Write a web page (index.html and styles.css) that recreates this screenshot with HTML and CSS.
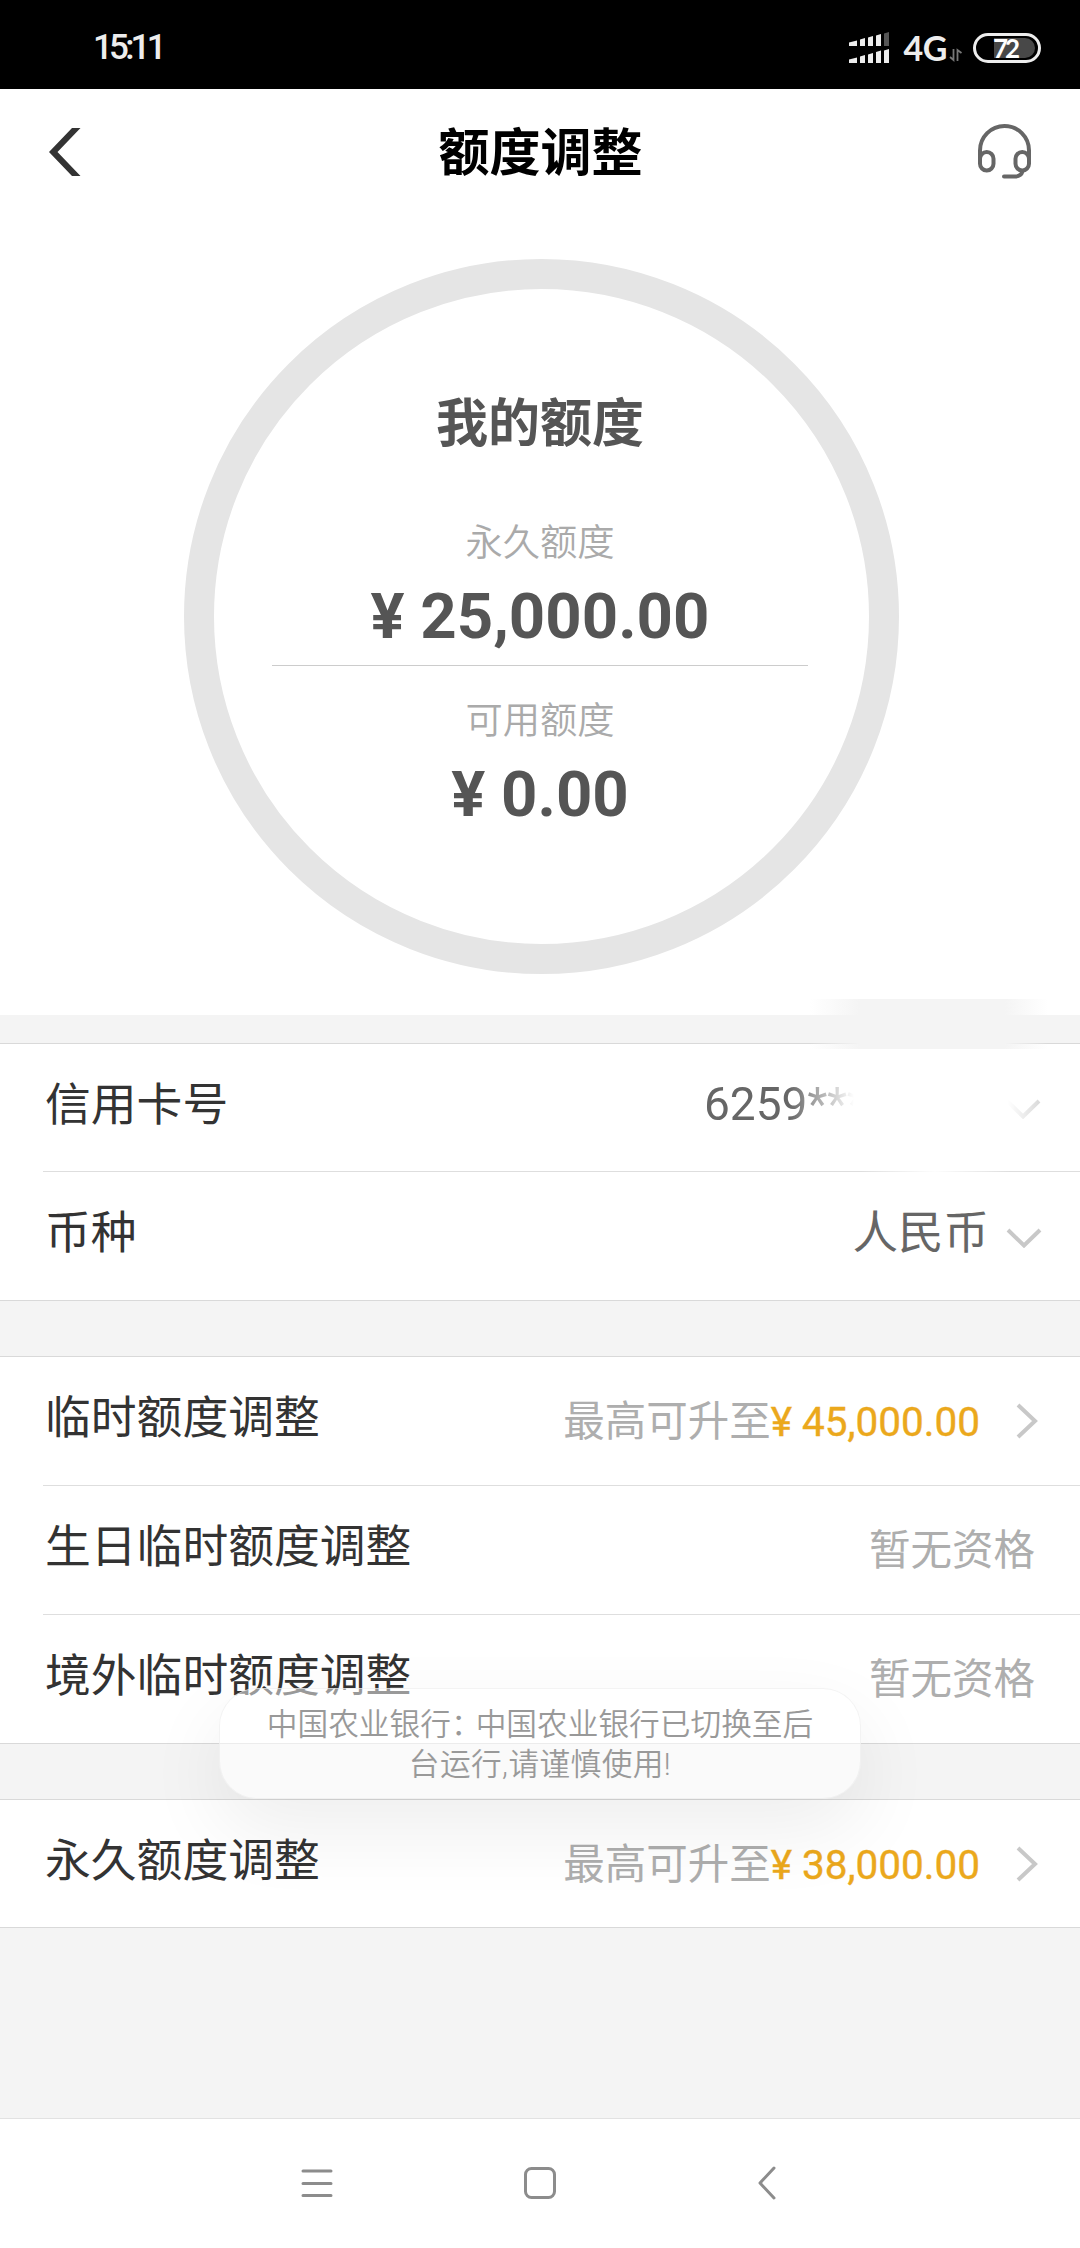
FILE: index.html
```html
<!DOCTYPE html>
<html lang="zh-CN">
<head>
<meta charset="utf-8">
<title>额度调整</title>
<link rel="stylesheet" href="styles.css">
</head>
<body>
<div class="screen">
  <div class="status">
    <div class="clock">15:11</div>
    <div class="status-icons">
      <svg class="signal" width="42" height="34" viewBox="0 0 42 34">
        <g fill="#ededed">
          <path d="M0 11.5l8-2V15H0zM11 8.5l5-1.5v8h-5zM19 6.5l5-1.5v10h-5zM27 4.500l5-1.500v12h-5z"/>
          <path d="M0 28.500l8-2V32H0zM11 25.500l5-1.500v8h-5zM19 23.500l5-1.500v10h-5zM27 21l5-1.500V32h-5zM35 19.500l5-1.500v14h-5z"/>
        </g>
        <path d="M35 2.500L40 1v14h-5z" fill="#555"/>
      </svg>
      <span class="network">4G</span>
      <svg class="traffic" width="14" height="14" viewBox="0 0 14 14"><path d="M1 9l3.500 3V1M8.500 13V2l4 3" fill="none" stroke="#777" stroke-width="1.800"/></svg>
      <div class="battery"><span>72</span></div>
    </div>
  </div>

  <header class="header">
    <svg width="32" height="48" viewBox="0 0 32 48"><path d="M23 0h8.500L8.500 24l23 24H23L0 24z" fill="#333"/></svg>
    <h1>额度调整</h1>
    <svg width="54" height="56" viewBox="0 0 54 56" fill="none" stroke="#666" stroke-width="4" stroke-linecap="round">
      <path d="M2 38V26.500a24.500 24.500 0 0 1 49 0V38"/>
      <rect x="2" y="28" width="13.500" height="18.500" rx="6.700"/>
      <rect x="37.500" y="28" width="13.500" height="18.500" rx="6.700"/>
      <path d="M44.500 47.500q-1.500 5-8 5H26"/>
    </svg>
  </header>

  <section class="summary">
    <div class="ring">
      <h2>我的额度</h2>
      <div class="caption">永久额度</div>
      <div class="amount">¥ 25,000.00</div>
      <div class="rule"></div>
      <div class="caption">可用额度</div>
      <div class="amount">¥ 0.00</div>
    </div>
  </section>

  <section class="group card-group">
    <div class="row">
      <span class="label">信用卡号</span>
      <span class="value card-number">6259***</span>
      <svg class="down masked" width="36" height="20" viewBox="0 0 36 20"><path d="M2 2l16 15.500L34 2"/></svg>
    </div>
    <div class="row">
      <span class="label">币种</span>
      <span class="value">人民币</span>
      <svg class="down" width="36" height="20" viewBox="0 0 36 20"><path d="M2 2l16 15.500L34 2"/></svg>
    </div>
    <div class="smudge"></div>
    <div class="smudge-line"></div>
  </section>

  <section class="group">
    <div class="row">
      <span class="label">临时额度调整</span>
      <span class="hint">最高可升至<b>¥ 45,000.00</b></span>
      <svg class="next" width="22" height="36" viewBox="0 0 22 36"><path d="M2 2l17 16L2 34"/></svg>
    </div>
    <div class="row">
      <span class="label">生日临时额度调整</span>
      <span class="hint none">暂无资格</span>
    </div>
    <div class="row">
      <span class="label">境外临时额度调整</span>
      <span class="hint none">暂无资格</span>
    </div>
  </section>

  <section class="group">
    <div class="row">
      <span class="label">永久额度调整</span>
      <span class="hint">最高可升至<b>¥ 38,000.00</b></span>
      <svg class="next" width="22" height="36" viewBox="0 0 22 36"><path d="M2 2l17 16L2 34"/></svg>
    </div>
  </section>

  <nav class="nav">
    <svg width="32" height="34" viewBox="0 0 32 34"><path d="M2 5h28M2 17.500h28M2 29.500h28"/></svg>
    <svg class="home" width="34" height="34" viewBox="0 0 34 34"><rect x="2.500" y="2.500" width="29" height="29" rx="6"/></svg>
    <svg class="back" width="20" height="34" viewBox="0 0 20 34"><path d="M17 2L3 17l14 15"/></svg>
  </nav>

  <div class="toast">中国农业银行<span class="colon">：</span>中国农业银行已切换至后<br><span class="tail">台运行,请谨慎使用!</span></div>
</div>
</body>
</html>
```
FILE: styles.css
```css
* { box-sizing: border-box; }
body { margin: 0; background: #f4f4f4; font-family: Roboto, "Noto Sans CJK SC", sans-serif; }
h1, h2 { margin: 0; }
svg { display: block; flex: none; }
.screen { position: relative; width: 1080px; height: 2248px; display: flex; flex-direction: column; overflow: hidden; background: #f4f4f4; }

.status { height: 89px; flex: none; background: #000; color: #ededed; display: flex; justify-content: space-between; align-items: center; padding: 6px 39px 0 93px; }
.clock { font-size: 35px; font-weight: 500; letter-spacing: -3.800px; line-height: 40px; padding-top: 1px; }
.status-icons { display: flex; align-items: center; }
.network { font: 700 34px/40px Lato, sans-serif; margin-left: 13px; letter-spacing: -.5px; }
.traffic { margin: 14px 10px 0 2px; }
.battery { width: 68px; height: 30px; border: 3px solid #ededed; border-radius: 15px; padding: 2px 3px 2px 18px; }
.battery span { display: block; height: 20px; background: #484848; border-radius: 0 10px 10px 0; font: 700 26px/20px Lato, sans-serif; letter-spacing: -3px; text-indent: -1px; color: #fff; }

.header { height: 124px; flex: none; background: #fff; display: flex; align-items: center; justify-content: space-between; padding: 1px 48px 0 49px; }
.header h1 { font-size: 51px; font-weight: 700; line-height: 60px; color: #000; margin-left: 22px; padding-top: 5px; }

.summary { height: 802px; flex: none; background: #fff; display: flex; justify-content: center; padding: 46px 0 0 3px; }
.ring { width: 715px; height: 715px; border: 30px solid #e5e5e5; border-radius: 50%; display: flex; flex-direction: column; align-items: center; padding: 106px 3px 0 0; }
.ring h2 { font-size: 52px; font-weight: 700; line-height: 60px; color: #555; }
.caption { margin-top: 63px; font-size: 37.300px; line-height: 50px; color: #aaa; font-weight: 350; }
.amount { font-size: 63.500px; line-height: 70px; font-weight: 700; color: #555; margin-top: 14px; }
.rule { width: 536px; height: 1px; background: #ccc; margin-top: 13px; flex: none; }
.rule + .caption { margin-top: 30px; }

.group { position: relative; flex: none; background: #fff; border-top: 1px solid #d9d9d9; border-bottom: 1px solid #d9d9d9; margin-top: 55px; }
.card-group { margin-top: 28px; }
.row { height: 129px; display: flex; align-items: center; margin-left: 43px; padding: 0 38px 0 2px; border-bottom: 1px solid #dedede; }
.row:last-child { border-bottom: 0; height: 128px; }
.card-group .row { height: 128px; }
.card-group .row:nth-child(2) { border-bottom: 0; }
.row:only-child { height: 127px; }
.label { flex: 1; font-size: 45.800px; line-height: 60px; color: #333; padding-bottom: 4px; }
.value { font-size: 45.500px; line-height: 60px; color: #666; padding-bottom: 4px; }
.card-number { font-size: 46px; width: 284px; margin-right: 70px; padding-bottom: 8px; -webkit-mask-image: linear-gradient(90deg, #000 85px, transparent 150px); mask-image: linear-gradient(90deg, #000 85px, transparent 150px); }
.down { margin-left: 17px; margin-top: 3px; }
.card-number + .down { margin-left: -53px; margin-right: 1px; }
.down path, .next path { fill: none; stroke: #c8c8c8; stroke-width: 4; }
.masked { -webkit-mask-image: linear-gradient(90deg, transparent 3px, #000 50px); mask-image: linear-gradient(90deg, transparent 3px, #000 50px); }
.hint { font-size: 41.500px; line-height: 60px; color: #aeaeae; white-space: nowrap; padding-top: 2px; }
.hint b { font-weight: 400; color: #eba81c; font-size: 40.500px; -webkit-text-stroke: .4px #eba81c; }
.next { margin-left: 36px; margin-right: 4px; }
.none { margin-right: 7px; }

.smudge { position: absolute; left: 810px; top: -45px; width: 250px; height: 50px; background: linear-gradient(90deg, transparent, #f4f4f4 50px, #f4f4f4 195px, transparent 238px); }
.smudge-line { position: absolute; left: 860px; top: 120px; width: 150px; height: 16px; background: linear-gradient(90deg, transparent, #fffffff0 50%, transparent); }

.nav { margin-top: auto; height: 130px; flex: none; background: #fff; border-top: 1px solid #e2e2e2; display: flex; align-items: center; padding: 0 0 1px 301px; }
.nav svg { fill: none; stroke: #8c8c8c; stroke-width: 3; stroke-linecap: round; stroke-linejoin: round; }
.home { margin-left: 190px; }
.back { margin-left: 200px; }

.toast { position: absolute; left: 219px; top: 1688px; width: 642px; height: 111px; border-radius: 38px; border: 1px solid rgba(235,235,235,.6); background: rgba(255,255,255,.5); box-shadow: 0 30px 80px rgba(0,0,0,.07); text-align: center; padding-top: 16px; font-size: 30.700px; line-height: 40px; color: #999; font-weight: 350; white-space: nowrap; }
.colon { margin-right: -6px; }
.tail { letter-spacing: .4px; }
```
